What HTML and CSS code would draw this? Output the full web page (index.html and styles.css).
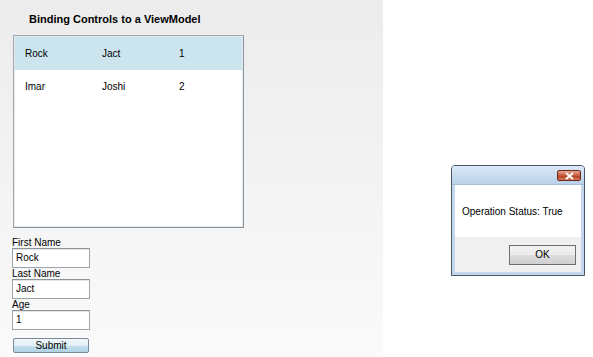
FILE: index.html
```html
<!DOCTYPE html>
<html>
<head>
<meta charset="utf-8">
<link rel="stylesheet" href="styles.css">
</head>
<body>
<div class="screen">
  <div class="app">
    <h1 class="title">Binding Controls to a ViewModel</h1>
    <div class="listbox">
      <div class="row selected"><span class="c1">Rock</span><span class="c2">Jact</span><span class="c3">1</span></div>
      <div class="row"><span class="c1">Imar</span><span class="c2">Joshi</span><span class="c3">2</span></div>
    </div>
    <form class="form">
      <label class="lbl">First Name</label>
      <div class="tb">Rock</div>
      <label class="lbl">Last Name</label>
      <div class="tb">Jact</div>
      <label class="lbl">Age</label>
      <div class="tb">1</div>
      <div class="submit">Submit</div>
    </form>
  </div>
  <div class="desktop">
    <div class="dialog">
      <div class="titlebar">
        <div class="close"><svg width="11" height="8" viewBox="0 0 11 8"><path d="M2 1 L9 7 M9 1 L2 7" stroke="#fff" stroke-width="2" fill="none"/></svg></div>
      </div>
      <div class="dbody">Operation Status: True</div>
      <div class="dfoot"><div class="ok">OK</div></div>
    </div>
  </div>
</div>
</body>
</html>
```
FILE: styles.css
```css
html, body { margin: 0; padding: 0; }
body { width: 593px; height: 357px; overflow: hidden; background: #fff; font-family: "Liberation Sans", Arial, sans-serif; font-size: 10px; color: #000; }
.screen { display: flex; height: 357px; }
.app { width: 383px; height: 357px; background: linear-gradient(#ececec, #fafafa); box-sizing: border-box; padding: 0 0 0 12px; }
.title { margin: 0; padding: 13px 0 0 17px; height: 22px; font-size: 11px; font-weight: bold; line-height: 12px; box-sizing: border-box; }
.listbox { margin: 13px 0 0 1px; width: 231px; height: 193px; box-sizing: border-box; border: 1px solid #a0a8b0; border-right-color: #8a949c; border-bottom-color: #8a949c; background: #fff; padding: 1px; box-shadow: inset 0 0 0 1px #e6e9ec; }
.row { display: flex; height: 33px; align-items: center; }
.row.selected { background: #cbe4ee; }
.c1 { padding-left: 10px; width: 77px; }
.c2 { width: 77px; }
.form { display: flex; flex-direction: column; align-items: flex-start; margin-top: 9px; }
.lbl { line-height: 11px; height: 11px; }
.tb { width: 78px; height: 20px; box-sizing: border-box; border: 1px solid #9aa4ad; border-top-color: #8a949c; background: #fff; padding: 0 0 0 3px; line-height: 18px; box-shadow: inset 0 1px 0 #e4e4e4; }
.submit { margin: 8px 0 0 1px; width: 76px; height: 15px; box-sizing: border-box; border: 1px solid #7a8a98; border-radius: 2px; background: linear-gradient(#f2f8fb 0%, #e0eef6 50%, #c4dfee 51%, #b2d3e6 100%); text-align: center; line-height: 13px; }
.desktop { flex: 1; padding: 165px 0 0 68px; }
.dialog { width: 134px; height: 111px; box-sizing: border-box; border: 1px solid #4a5866; border-radius: 4px 4px 0 0; background: #f0f0f0; display: flex; flex-direction: column; overflow: hidden; }
.titlebar { height: 19px; background: linear-gradient(#dce8f5, #b9d1ea); display: flex; justify-content: flex-end; align-items: flex-start; padding: 4px 3px 0 0; box-sizing: border-box; border-bottom: 1px solid #a9bfd6; }
.close { width: 24px; height: 11px; border: 1px solid #6b2a1e; border-radius: 2px; background: linear-gradient(#e8a591, #c75a40 50%, #b23b20 51%, #d07a5c); display: flex; align-items: center; justify-content: center; box-sizing: border-box; }
.dbody { height: 52px; background: #fff; padding: 21px 0 0 7px; box-sizing: border-box; border-left: 3px solid #c2d6ec; border-right: 3px solid #c2d6ec; }
.dfoot { flex: 1; display: flex; justify-content: flex-end; align-items: flex-start; padding: 8px 5px 0 0; border-left: 3px solid #c2d6ec; border-right: 3px solid #c2d6ec; border-bottom: 3px solid #c2d6ec; }
.ok { width: 67px; height: 20px; box-sizing: border-box; border: 1px solid #707070; background: linear-gradient(#f2f2f2, #ebebeb 50%, #dddddd 51%, #cfcfcf); text-align: center; line-height: 18px; }
```
